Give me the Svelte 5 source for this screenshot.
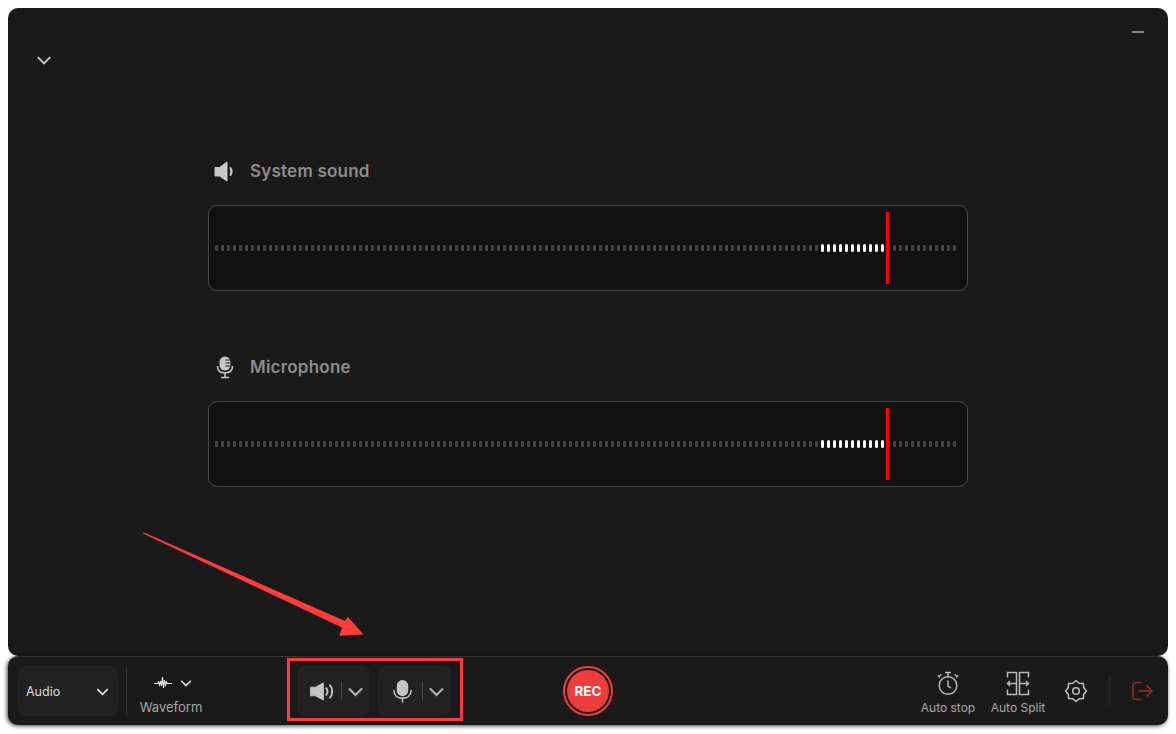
<script>
  const dots = Array.from({ length: 124 }, (_, i) => i >= 101 && i <= 111);
  const meters = [
    { label: "System sound", icon: "speaker" },
    { label: "Microphone", icon: "mic" },
  ];
</script>

{#snippet chevron(size, color)}
  <svg class="chev" width={size} height={size} viewBox="0 0 16 16" fill="none" stroke={color} stroke-width="1.7">
    <path d="M2.5 5.5 8 11l5.5-5.5" />
  </svg>
{/snippet}

{#snippet speaker(w, h)}
  <svg width={w} height={h} viewBox="0 0 26 20" fill="none">
    <path d="M1.500 5.500h5L15 1v18l-8.500-4.500h-5z" fill="#c4c4c4" stroke="#c4c4c4" stroke-linejoin="round" />
    <path d="M18 6.500c1.500 2 1.500 5 0 7M22 3.500c3 3.600 3 9.400 0 13" stroke="#c4c4c4" stroke-width="2" stroke-linecap="round" />
  </svg>
{/snippet}

{#snippet mic(w, h)}
  <svg width={w} height={h} viewBox="0 0 20 24" fill="none">
    <rect x="4" y="0.500" width="12" height="17" rx="6" fill="#c4c4c4" />
    <path d="M1 11.500c0 5 3.500 8 9 8s9-3 9-8M10 19.500v4" stroke="#c4c4c4" stroke-width="1.600" stroke-linecap="round" />
  </svg>
{/snippet}

<div class="page">
  <main class="panel">
    <div class="top">
      {@render chevron(18, "#c8c8c8")}
      <span class="minimize"></span>
    </div>
    {#each meters as m}
      <section class="meter">
        <h2>
          <span class="label-icon">
            {#if m.icon === "speaker"}
              <svg width="22" height="21" viewBox="0 0 22 21" fill="none">
                <path d="M1 6.500h4.500L13 1v19l-7.500-5H1z" fill="#c8c8c8" stroke="#c8c8c8" stroke-linejoin="round" />
                <path d="M16.500 7c1.300 2.200 1.300 4.800 0 7" stroke="#c8c8c8" stroke-width="2" stroke-linecap="round" />
              </svg>
            {:else}
              <svg width="18" height="23" viewBox="0 0 18 23" fill="none">
                <rect x="3.500" y="0.500" width="11" height="14" rx="5.500" fill="#c8c8c8" />
                <path d="M9.500 4h5M9.500 7h5M9.500 10h5" stroke="#1a1a1a" stroke-width="1" />
                <path d="M1.500 10c0 4.500 3 7 7.500 7s7.500-2.500 7.500-7M9 17v4M5 21.500h8" stroke="#c8c8c8" stroke-width="1.600" />
              </svg>
            {/if}
          </span>
          {m.label}
        </h2>
        <div class="track">
          <div class="dots">
            {#each dots as on}
              <i class:on></i>
            {/each}
          </div>
          <span class="needle"></span>
        </div>
      </section>
    {/each}
  </main>

  <footer class="bar">
    <button class="select">Audio {@render chevron(15, "#e6e6e6")}</button>
    <span class="rule"></span>
    <div class="wave">
      <div class="wave-top">
        <svg width="18" height="14" viewBox="0 0 18 14" fill="none" stroke="#e8e8e8" stroke-width="1.100">
          <path d="M0 7.500h3.500l1-1.500 1 3 1-4 1 5 1-9 1 11 1-8 1 5 1-3 1 1.500H18" />
        </svg>
        {@render chevron(14, "#e6e6e6")}
      </div>
      <span class="cap">Waveform</span>
    </div>

    <div class="sources">
      <div class="source">
        {@render speaker(25, 19)}
        <span class="sep"></span>
        {@render chevron(19, "#b4b4b4")}
      </div>
      <div class="source">
        <span class="mic-slot">{@render mic(19, 24)}</span>
        <span class="sep"></span>
        {@render chevron(19, "#b4b4b4")}
      </div>
    </div>

    <button class="rec"><span>REC</span></button>

    <div class="tools">
      <div class="tool stop">
        <svg width="24" height="25" viewBox="0 0 24 25" fill="none" stroke="#b8b8b8" stroke-width="1.500">
          <circle cx="12" cy="14.500" r="8.800" />
          <path d="M12 9.500v5.500l3 2M9 1.500h6M12 1.500v4M3 5.500l2.500-2M21 5.500l-2.500-2M2 4.500l2 2M22 4.500l-2 2" />
        </svg>
        <span class="cap small">Auto stop</span>
      </div>
      <div class="tool split">
        <svg width="24" height="25" viewBox="0 0 24 25" fill="none" stroke="#b8b8b8" stroke-width="1.500">
          <path d="M1.500 6.500v-5h9v22h-9v-5M22.500 6.500v-5h-9v22h9v-5M10.500 12.500H1.500M4 10l-2.500 2.500L4 15M13.500 12.500h9M20 10l2.500 2.500L20 15" />
        </svg>
        <span class="cap small">Auto Split</span>
      </div>
      <svg class="gear" width="24" height="24" viewBox="0 0 24 24" fill="none" stroke="#c0c0c0" stroke-width="1.500" stroke-linejoin="round">
        <path d="M12 1.500l3.200 2.800 4.200.3.300 4.200 2.800 3.200-2.800 3.200-.3 4.200-4.200.3-3.200 2.800-3.200-2.800-4.200-.3-.3-4.200L1.500 12l2.800-3.200.3-4.200 4.200-.3z" />
        <circle cx="12" cy="12" r="3.300" />
      </svg>
      <span class="rule dim"></span>
      <svg class="exit" width="21" height="20" viewBox="0 0 21 20" fill="none" stroke="#9a2c2c" stroke-width="1.500">
        <path d="M9 1.500H4a3 3 0 0 0-3 3v11a3 3 0 0 0 3 3h5M6.500 10h13.500M14.500 4.500 20 10l-5.500 5.500" />
      </svg>
    </div>
  </footer>

  <!-- annotation drawn on top of the screenshot -->
  <svg class="arrow" width="240" height="110" viewBox="0 0 240 110">
    <polygon points="3,2.500 4,2.500 205,91 207.700,86.700 223.500,104.500 199.300,105.700 202,97.500 3,3.500" fill="#ff3b3b" />
  </svg>
  <span class="frame"></span>
</div>

<style>
  :global(body) {
    margin: 0;
    background: #fff;
  }

  .page {
    position: relative;
    width: 1176px;
    height: 734px;
    padding: 8px;
    box-sizing: border-box;
    font-family: Inter, "Liberation Sans", sans-serif;
    overflow: hidden;
  }

  .panel {
    height: 648px;
    box-sizing: border-box;
    background: #1a1a1a;
    border-radius: 10px;
    padding: 0 200px;
  }

  .top {
    height: 129px;
    margin: 0 -200px;
    padding: 0 24px 0 27px;
    display: flex;
    justify-content: space-between;
  }

  .top .chev {
    margin-top: 43px;
  }

  .minimize {
    width: 12px;
    height: 1.500px;
    margin-top: 23px;
    background: #8a8a8a;
  }

  .meter {
    height: 196px;
    box-sizing: border-box;
    padding-top: 23px;
  }

  h2 {
    display: flex;
    align-items: center;
    height: 22px;
    margin: 0 0 23px;
    font-size: 17px;
    font-weight: 600;
    letter-spacing: 0.22px;
    color: #8c8c8c;
  }

  .label-icon {
    width: 42px;
    display: flex;
    justify-content: center;
    padding-right: 8px;
    box-sizing: border-box;
  }

  .track {
    position: relative;
    height: 86px;
    box-sizing: border-box;
    background: #121212;
    border: 1px solid #484848;
    border-radius: 9px;
    display: flex;
    align-items: center;
    padding-left: 6px;
  }

  .dots {
    display: flex;
    align-items: center;
    gap: 3px;
  }

  .dots i {
    width: 3px;
    height: 6px;
    border-radius: 1px;
    background: #444;
  }

  .dots i.on {
    height: 8px;
    border-radius: 1.500px;
    background: #fff;
  }

  .needle {
    position: absolute;
    left: 677px;
    top: 6px;
    width: 3px;
    height: 72px;
    background: #f00;
  }

  .bar {
    display: flex;
    align-items: center;
    height: 69px;
    padding-left: 10px;
    background: #1a1a1a;
    border-radius: 10px;
    box-shadow: -1px 1px 4px rgba(0, 0, 0, 0.75);
    border-top: 1px solid #333;
    box-sizing: border-box;
  }

  button {
    border: 0;
    font: inherit;
    padding: 0;
  }

  .select {
    width: 100px;
    height: 50px;
    display: flex;
    align-items: center;
    justify-content: space-between;
    padding: 0 8px;
    box-sizing: border-box;
    background: #222;
    border-radius: 8px;
    color: #ddd;
    font-size: 12.500px;
  }

  .rule {
    width: 1px;
    height: 50px;
    margin-left: 8px;
    background: #2e2e2e;
  }

  .wave {
    width: 88px;
    margin-top: 7px;
    display: flex;
    flex-direction: column;
    align-items: center;
    gap: 7px;
  }

  .wave-top {
    display: flex;
    align-items: center;
    gap: 7px;
    height: 18px;
    padding-left: 5px;
  }

  .cap {
    font-size: 13px;
    color: #a6a6a6;
    white-space: nowrap;
  }

  .cap.small {
    font-size: 12px;
  }

  .sources {
    display: flex;
    gap: 8px;
    margin-left: 82px;
  }

  .source {
    width: 73px;
    height: 50px;
    display: flex;
    align-items: center;
    padding-left: 12px;
    box-sizing: border-box;
    background: #222;
    border-radius: 8px;
  }

  .mic-slot {
    width: 25px;
    display: flex;
    justify-content: center;
  }

  .sep {
    width: 1px;
    height: 18px;
    margin: 0 4px 0 7px;
    background: #444;
  }

  .rec {
    width: 50px;
    height: 50px;
    margin-left: 112px;
    padding: 2px;
    box-sizing: border-box;
    background: transparent;
    border: 2px solid #f03c3c;
    border-radius: 50%;
    display: flex;
  }

  .rec span {
    flex: 1;
    display: flex;
    align-items: center;
    justify-content: center;
    border-radius: 50%;
    background: #f03c3c;
    color: #fff;
    font-size: 13.500px;
    font-weight: 700;
  }

  .tools {
    display: flex;
    align-items: center;
    margin-left: auto;
    padding-right: 15px;
  }

  .tool {
    display: flex;
    flex-direction: column;
    align-items: center;
    gap: 4px;
    width: 70px;
    margin-top: 4px;
  }

  .gear {
    margin-left: 11px;
  }

  .rule.dim {
    height: 30px;
    margin-left: 21px;
    background: #2a2a2a;
  }

  .exit {
    margin-left: 22px;
  }

  .arrow {
    position: absolute;
    left: 140px;
    top: 530px;
  }

  .frame {
    position: absolute;
    left: 287px;
    top: 658px;
    width: 176px;
    height: 63px;
    box-sizing: border-box;
    border: 3px solid #ff3b3b;
  }
</style>
